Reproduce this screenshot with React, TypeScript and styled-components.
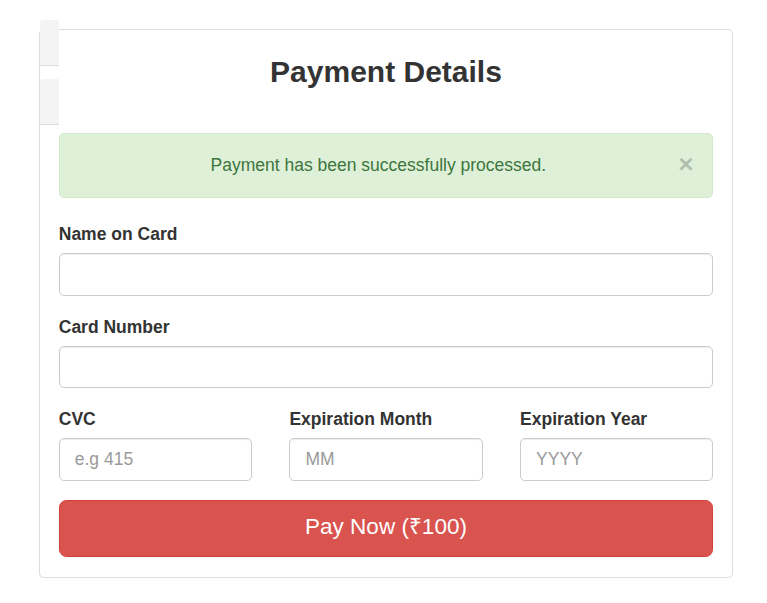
import React from "react";
import styled, { createGlobalStyle } from "styled-components";

const GlobalStyle = createGlobalStyle`
  * {
    box-sizing: border-box;
  }
  body {
    margin: 0;
    background: #fff;
    font-family: "Liberation Sans", Arial, sans-serif;
    font-size: 17.5px;
    line-height: 1.42857;
    color: #333;
  }
`;

const Page = styled.div`
  padding: 29px 0 0 39px;
`;

const Panel = styled.div`
  position: relative;
  width: 694px;
  background: #fff;
  border: 1px solid #ddd;
  border-radius: 5px;
  box-shadow: 0 1px 1px rgba(0, 0, 0, 0.05);
  padding: 0 18.75px 20px;
`;

const SideTabs = styled.div`
  position: absolute;
  left: 0;
  top: -10px;
  width: 19px;
  display: flex;
  flex-direction: column;
  gap: 13px;
`;

const SideTab = styled.div`
  height: 46px;
  background: #f4f4f4;
  border-bottom: 1px solid #ddd;
  border-radius: 4px 0 0 0;
`;

const Title = styled.h3`
  margin: 5px 0 45px;
  padding-top: 20px;
  font-size: 30px;
  line-height: 33px;
  font-weight: bold;
  text-align: center;
  color: #333;
`;

const Alert = styled.div`
  display: flex;
  align-items: center;
  padding: 18.75px;
  margin-bottom: 24.5px;
  background: #dff0d8;
  border: 1px solid #d6e9c6;
  border-radius: 5px;
  color: #3c763d;
  line-height: 25px;
`;

const AlertText = styled.div`
  flex: 1;
  text-align: center;
`;

const Close = styled.button`
  border: 0;
  padding: 0;
  margin-top: -2px;
  background: transparent;
  font-family: "Liberation Sans", Arial, sans-serif;
  font-size: 26.25px;
  font-weight: bold;
  line-height: 1;
  color: #000;
  opacity: 0.2;
  text-shadow: 0 1px 0 #fff;
  cursor: pointer;
`;

const Group = styled.div`
  margin-bottom: 18.75px;
`;

const Label = styled.label`
  display: block;
  margin-bottom: 6.25px;
  font-weight: bold;
  line-height: 25px;
`;

const Input = styled.input`
  display: block;
  width: 100%;
  height: 42.5px;
  padding: 7.5px 15px;
  font-family: "Liberation Sans", Arial, sans-serif;
  font-size: 17.5px;
  color: #555;
  background: #fff;
  border: 1px solid #ccc;
  border-radius: 5px;
  box-shadow: inset 0 1px 1px rgba(0, 0, 0, 0.075);
  outline: none;

  &::placeholder {
    color: #999;
  }
`;

const Row = styled.div`
  display: grid;
  grid-template-columns: repeat(3, 1fr);
  column-gap: 37.5px;
`;

const PayButton = styled.button`
  display: block;
  width: 100%;
  height: 57px;
  padding: 0 25px 3px;
  font-family: "Liberation Sans", Arial, sans-serif;
  font-size: 22.5px;
  line-height: 30px;
  color: #fff;
  background: #d9534f;
  border: 1px solid #d43f3a;
  border-radius: 7.5px;
  cursor: pointer;
`;

const App: React.FC = () => {
  return (
    <Page>
      <GlobalStyle />
      <Panel>
        <SideTabs>
          <SideTab />
          <SideTab />
        </SideTabs>
        <Title>Payment Details</Title>
        <Alert>
          <AlertText>Payment has been successfully processed.</AlertText>
          <Close aria-label="Close">×</Close>
        </Alert>
        <Group>
          <Label>Name on Card</Label>
          <Input type="text" />
        </Group>
        <Group>
          <Label>Card Number</Label>
          <Input type="text" />
        </Group>
        <Row>
          <Group>
            <Label>CVC</Label>
            <Input type="text" placeholder="e.g 415" />
          </Group>
          <Group>
            <Label>Expiration Month</Label>
            <Input type="text" placeholder="MM" />
          </Group>
          <Group>
            <Label>Expiration Year</Label>
            <Input type="text" placeholder="YYYY" />
          </Group>
        </Row>
        <PayButton>Pay Now (₹100)</PayButton>
      </Panel>
    </Page>
  );
};

export default App;
